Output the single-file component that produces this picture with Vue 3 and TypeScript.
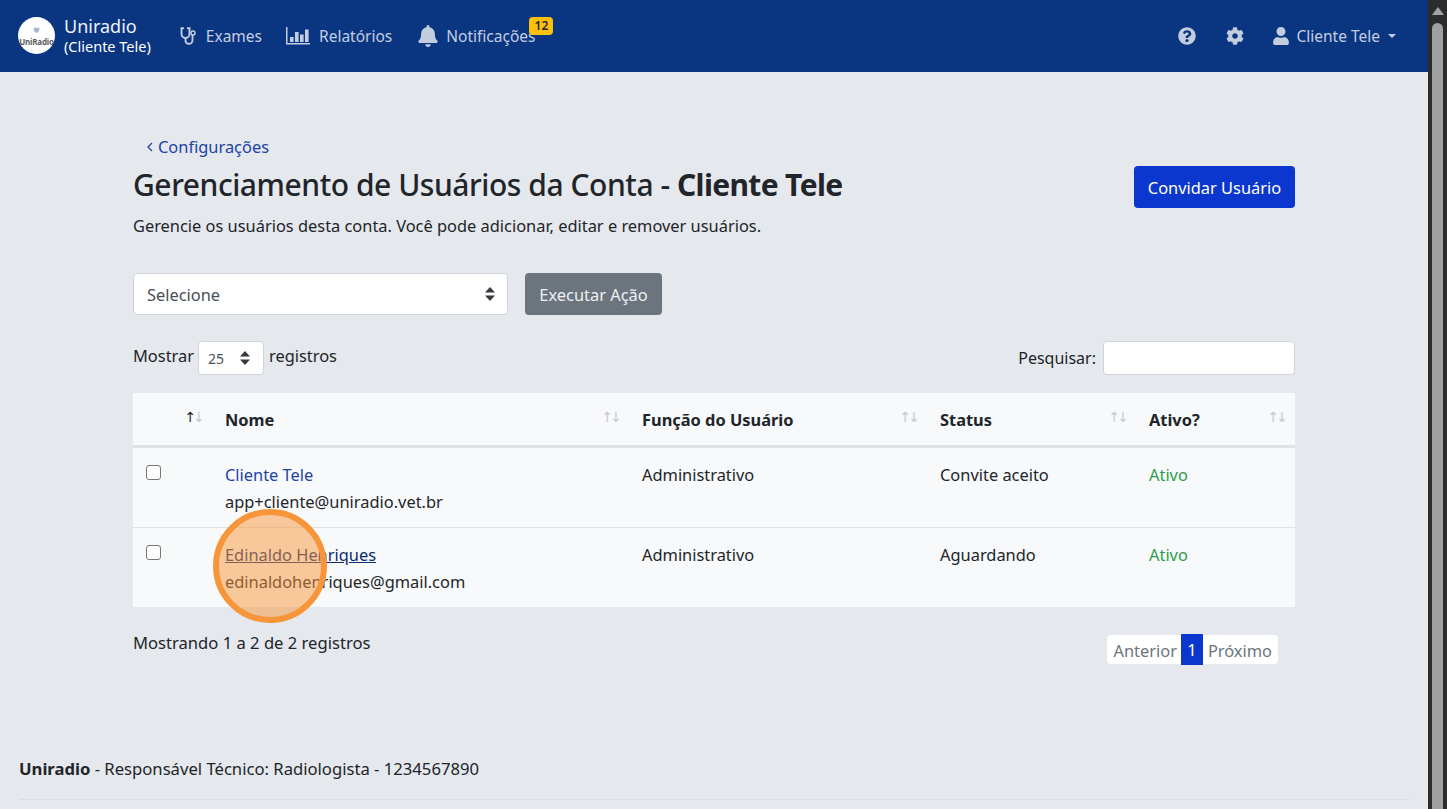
<script setup lang="ts">
interface Column {
  label: string;
  active?: boolean;
}

interface UserRow {
  name: string;
  email: string;
  role: string;
  status: string;
  hovered?: boolean;
}

const columns: Column[] = [
  { label: '', active: true },
  { label: 'Nome' },
  { label: 'Função do Usuário' },
  { label: 'Status' },
  { label: 'Ativo?' },
];

const users: UserRow[] = [
  { name: 'Cliente Tele', email: 'app+cliente@uniradio.vet.br', role: 'Administrativo', status: 'Convite aceito' },
  { name: 'Edinaldo Henriques', email: 'edinaldohenriques@gmail.com', role: 'Administrativo', status: 'Aguardando', hovered: true },
];
</script>

<template>
  <div class="shell">
    <div class="page">
      <nav class="navbar">
        <a class="brand">
          <span class="logo">
            <svg class="logo-mark" viewBox="0 0 10 10"><path d="M1 1h8v4.500L5 9 1 5.500z" /></svg>
            <span class="logo-text">UniRadio</span>
          </span>
          <span class="brand-text">
            <span class="brand-name">Uniradio</span>
            <span class="brand-sub">(Cliente Tele)</span>
          </span>
        </a>

        <ul class="nav-links">
          <li class="nav-item exames">
            <svg class="ico steth" viewBox="0 0 18 18" fill="none" stroke="currentColor" stroke-width="1.900" stroke-linecap="round">
              <path d="M3.200 1.200H1.500v5.600c0 2.500 1.800 4.200 4 4.200s4-1.700 4-4.200V1.200H7.800" />
              <path d="M5.500 11v2.200c0 2 1.400 3.500 3.400 3.500s3.600-1.500 3.600-3.500V8.500" />
              <circle cx="13" cy="6" r="2" stroke-width="1.500" />
            </svg>
            Exames
          </li>
          <li class="nav-item relatorios">
            <svg class="ico chart" viewBox="0 0 24 18" fill="currentColor">
              <path d="M0 0h1.500v16H24v1.500H0z" />
              <rect x="4" y="10" width="3.600" height="5" />
              <rect x="9" y="5" width="3.600" height="10" />
              <rect x="14" y="7.500" width="3.600" height="7.500" />
              <rect x="19" y="2.500" width="3.600" height="12.500" />
            </svg>
            Relatórios
          </li>
          <li class="nav-item notif">
            <svg class="ico bell" viewBox="0 0 448 512" fill="currentColor">
              <path d="M224 512c35.320 0 63.970-28.650 63.970-64H160.030c0 35.350 28.650 64 63.970 64zm215.390-149.710c-19.320-20.760-55.470-51.990-55.470-154.290 0-77.700-54.480-139.900-127.940-155.160V32c0-17.670-14.320-32-31.980-32s-31.980 14.330-31.980 32v20.840C118.560 68.100 64.080 130.300 64.080 208c0 102.300-36.150 133.530-55.470 154.290-6 6.450-8.660 14.160-8.610 21.710.110 16.400 12.980 32 32.100 32h383.800c19.120 0 32-15.600 32.100-32 .050-7.550-2.610-15.270-8.610-21.710z" />
            </svg>
            Notificações
            <span class="badge">12</span>
          </li>
        </ul>

        <div class="nav-right">
          <svg class="ico round" viewBox="0 0 512 512" fill="currentColor">
            <path d="M504 256c0 136.997-111.043 248-248 248S8 392.997 8 256C8 119.083 119.043 8 256 8s248 111.083 248 248zM262.655 90c-54.497 0-89.255 22.957-116.549 63.758-3.536 5.286-2.353 12.415 2.715 16.258l34.699 26.310c5.205 3.947 12.621 3.008 16.665-2.122 17.864-22.658 30.113-35.797 57.303-35.797 20.429 0 45.698 13.148 45.698 32.958 0 14.976-12.363 22.667-32.534 33.976C247.128 238.528 216 254.941 216 296v4c0 6.627 5.373 12 12 12h56c6.627 0 12-5.373 12-12v-1.333c0-28.462 83.186-29.647 83.186-106.667 0-58.002-60.165-102-116.531-102zM256 338c-25.365 0-46 20.635-46 46 0 25.364 20.635 46 46 46s46-20.636 46-46c0-25.365-20.635-46-46-46z" />
          </svg>
          <svg class="ico round cog" viewBox="0 0 512 512" fill="currentColor">
            <path d="M487.400 315.700l-42.600-24.600c4.300-23.200 4.300-47 0-70.200l42.600-24.600c4.900-2.800 7.100-8.600 5.500-14-11.100-35.600-30-67.800-54.700-94.600-3.800-4.100-10-5.100-14.800-2.300L380.800 110c-17.900-15.400-38.500-27.300-60.800-35.100V25.800c0-5.600-3.900-10.500-9.400-11.700-36.700-8.200-74.300-7.800-109.200 0-5.500 1.200-9.400 6.100-9.400 11.700V75c-22.200 7.900-42.800 19.800-60.800 35.100L88.700 85.500c-4.900-2.800-11-1.900-14.800 2.300-24.700 26.700-43.600 58.900-54.700 94.600-1.700 5.400.600 11.200 5.500 14L67.300 221c-4.300 23.200-4.300 47 0 70.200l-42.600 24.600c-4.900 2.800-7.100 8.600-5.500 14 11.100 35.600 30 67.800 54.700 94.600 3.800 4.100 10 5.100 14.800 2.300l42.600-24.600c17.900 15.400 38.500 27.300 60.800 35.100v49.200c0 5.600 3.900 10.500 9.400 11.700 36.700 8.200 74.300 7.800 109.200 0 5.500-1.200 9.400-6.100 9.400-11.700v-49.200c22.200-7.900 42.800-19.800 60.800-35.100l42.600 24.600c4.900 2.800 11 1.900 14.800-2.300 24.700-26.700 43.600-58.900 54.700-94.600 1.500-5.500-.700-11.300-5.600-14.100zM256 336c-44.100 0-80-35.900-80-80s35.900-80 80-80 80 35.900 80 80-35.900 80-80 80z" />
          </svg>
          <span class="user-menu">
            <svg class="ico user" viewBox="0 0 448 512" fill="currentColor">
              <path d="M224 256c70.700 0 128-57.300 128-128S294.700 0 224 0 96 57.300 96 128s57.300 128 128 128zm89.600 32h-16.700c-22.200 10.200-46.900 16-72.900 16s-50.600-5.800-72.900-16h-16.700C60.200 288 0 348.200 0 422.400V464c0 26.500 21.500 48 48 48h352c26.500 0 48-21.500 48-48v-41.600c0-74.200-60.200-134.400-134.400-134.400z" />
            </svg>
            Cliente Tele
            <span class="caret"></span>
          </span>
        </div>
      </nav>

      <main class="content">
        <a class="back-link"><svg class="chev" viewBox="0 0 6 10" fill="none" stroke="currentColor" stroke-width="1.300"><path d="M5 1 1 5l4 4" /></svg>Configurações</a>

        <div class="title-row">
          <div>
            <h1>Gerenciamento de Usuários da Conta - <strong>Cliente Tele</strong></h1>
            <p class="lead">Gerencie os usuários desta conta. Você pode adicionar, editar e remover usuários.</p>
          </div>
          <button class="btn btn-primary">Convidar Usuário</button>
        </div>

        <div class="action-row">
          <div class="select-wrap bulk">
            <select class="bulk-select"><option>Selecione</option></select>
            <svg class="updown" viewBox="0 0 10 14" fill="currentColor"><path d="M5 0l5 5.500H0zM5 14 0 8.500h10z" /></svg>
          </div>
          <button class="btn btn-secondary">Executar Ação</button>
        </div>

        <div class="table-tools">
          <div class="length">
            Mostrar
            <div class="select-wrap small">
              <select class="length-select"><option>25</option></select>
              <svg class="updown" viewBox="0 0 10 14" fill="currentColor"><path d="M5 0l5 5.500H0zM5 14 0 8.500h10z" /></svg>
            </div>
            registros
          </div>
          <label class="search">Pesquisar: <input type="search" /></label>
        </div>

        <div class="table-wrap">
          <table>
            <colgroup>
              <col class="c-check" /><col class="c-name" /><col class="c-role" /><col class="c-status" /><col class="c-active" />
            </colgroup>
            <thead>
              <tr>
                <th v-for="col in columns" :key="col.label">
                  {{ col.label }}
                  <span class="sort" :class="{ asc: col.active }"><i class="up">↑</i><i class="down">↓</i></span>
                </th>
              </tr>
            </thead>
            <tbody>
              <tr v-for="user in users" :key="user.email">
                <td><input class="check" type="checkbox" /></td>
                <td>
                  <a class="user-link" :class="{ hovered: user.hovered }">{{ user.name }}</a>
                  <div class="email">{{ user.email }}</div>
                </td>
                <td>{{ user.role }}</td>
                <td>{{ user.status }}</td>
                <td class="active-cell">Ativo</td>
              </tr>
            </tbody>
          </table>
          <div class="click-mark"></div>
        </div>

        <div class="table-foot">
          <span class="info">Mostrando 1 a 2 de 2 registros</span>
          <div class="pager">
            <span class="page-btn first">Anterior</span>
            <span class="page-btn current">1</span>
            <span class="page-btn last">Próximo</span>
          </div>
        </div>
      </main>

      <footer class="footer">
        <p><strong>Uniradio</strong> - Responsável Técnico: Radiologista - 1234567890</p>
        <hr />
      </footer>
    </div>

    <aside class="scrollbar">
      <span class="sb-arrow"></span>
      <span class="sb-thumb"></span>
    </aside>
  </div>
</template>

<style scoped>
.shell {
  display: flex;
  height: 809px;
  overflow: hidden;
  font-family: "Noto Sans", "Open Sans", sans-serif;
  font-size: 16.4px;
  line-height: 24px;
  color: #212529;
}

.page {
  flex: 1;
  min-width: 0;
  background: #e5e8ed;
}

.navbar {
  display: flex;
  align-items: center;
  height: 72px;
  padding: 0 32px 1px 18px;
  box-sizing: border-box;
  background: #0a3580;
  color: #c3cde0;
  font-size: 15.5px;
}

.brand {
  display: flex;
  align-items: center;
  gap: 9px;
  color: #fff;
}

.logo {
  position: relative;
  display: block;
  width: 37px;
  height: 37px;
  border-radius: 50%;
  background: #fff;
}

.logo-mark {
  position: absolute;
  left: 15px;
  top: 10px;
  width: 7px;
  height: 7px;
  fill: #a9b6d8;
}

.logo-text {
  position: absolute;
  left: 0;
  right: 0;
  top: 13px;
  text-align: center;
  font-size: 8px;
  font-weight: 700;
  letter-spacing: -0.2px;
  color: #5c5c5c;
}

.brand-text {
  display: flex;
  flex-direction: column;
  margin-top: -2px;
}

.brand-name {
  font-size: 18px;
  line-height: 22px;
  color: #eef2f8;
}

.brand-sub {
  font-size: 14.5px;
  line-height: 18px;
}

.nav-links {
  display: flex;
  align-items: center;
  list-style: none;
  margin: 0 0 0 29px;
  padding: 0;
}

.nav-item {
  position: relative;
  display: flex;
  align-items: center;
}

.exames {
  gap: 8px;
}

.relatorios {
  gap: 9px;
  margin-left: 24px;
}

.notif {
  gap: 8px;
  margin-left: 26px;
}

.ico {
  display: block;
  flex: none;
}

.steth {
  width: 18px;
  height: 18px;
}

.chart {
  width: 24px;
  height: 18px;
}

.bell {
  width: 20px;
  height: 22px;
}

.badge {
  position: absolute;
  right: -18px;
  top: -7px;
  width: 24px;
  height: 18px;
  border-radius: 4px;
  background: #ffc107;
  color: #212529;
  font-size: 12px;
  font-weight: 600;
  line-height: 18px;
  text-align: center;
}

.nav-right {
  display: flex;
  align-items: center;
  margin-left: auto;
}

.round {
  width: 18px;
  height: 18px;
}

.cog {
  margin-left: 30px;
}

.user-menu {
  display: flex;
  align-items: center;
  gap: 8px;
  margin-left: 29px;
}

.user {
  width: 16px;
  height: 18px;
}

.caret {
  width: 0;
  height: 0;
  border-left: 4px solid transparent;
  border-right: 4px solid transparent;
  border-top: 4px solid currentColor;
}

.content {
  width: 1162px;
  margin: 0 auto;
  padding-top: 63px;
}

.back-link {
  display: flex;
  align-items: center;
  gap: 5px;
  padding-left: 14px;
  color: #1c43a6;
}

.chev {
  width: 6px;
  height: 10px;
}

.title-row {
  display: flex;
  justify-content: space-between;
  align-items: flex-start;
  margin-top: 7px;
}

h1 {
  margin: 0;
  font-size: 30px;
  line-height: 38px;
  font-weight: 500;
  letter-spacing: -0.45px;
}

h1 strong {
  font-weight: 700;
  letter-spacing: -0.65px;
}

.lead {
  margin: 10px 0 0;
}

.btn {
  height: 42px;
  padding: 2px 0 0;
  border: 0;
  border-radius: 4px;
  font: inherit;
  color: #fff;
}

.btn-primary {
  width: 161px;
  background: #0b37cf;
}

.btn-secondary {
  width: 137px;
  background: #6c757d;
  color: #eef0f2;
}

.action-row {
  display: flex;
  gap: 17px;
  margin-top: 35px;
}

.select-wrap {
  position: relative;
}

.select-wrap select {
  display: block;
  width: 100%;
  height: 100%;
  box-sizing: border-box;
  appearance: none;
  background: #fff;
  border: 1px solid #ced4da;
  border-radius: 4px;
  font: inherit;
  color: #495057;
}

.updown {
  position: absolute;
  top: 50%;
  width: 10px;
  height: 14px;
  margin-top: -7px;
  color: #343a40;
}

.bulk {
  width: 375px;
  height: 42px;
}

.bulk-select {
  padding: 2px 13px 0;
}

.bulk .updown {
  right: 13px;
}

.table-tools {
  display: flex;
  justify-content: space-between;
  margin-top: 26px;
}

.length {
  display: flex;
  align-items: flex-start;
  gap: 4px;
  height: 34px;
  line-height: 30px;
}

.small {
  width: 66px;
  height: 34px;
  margin-right: 1px;
}

.length-select {
  padding: 2px 9px 0;
  font-size: 14px !important;
}

.small .updown {
  right: 14px;
}

.search {
  display: flex;
  align-items: center;
  gap: 7px;
  font-size: 16px;
}

.search input {
  width: 192px;
  height: 34px;
  box-sizing: border-box;
  border: 1px solid #ced4da;
  border-radius: 4px;
  background: #fff;
}

.table-wrap {
  position: relative;
  margin-top: 18px;
}

table {
  width: 100%;
  table-layout: fixed;
  border-collapse: collapse;
  background: #f8f9fb;
}

.c-check { width: 84px; }
.c-name { width: 417px; }
.c-role { width: 298px; }
.c-status { width: 209px; }
.c-active { width: 154px; }

th {
  position: relative;
  height: 53px;
  padding: 2px 8px 0;
  box-sizing: border-box;
  text-align: left;
  font-weight: 700;
  border-bottom: 3px solid #dee2e6;
}

td {
  height: 80px;
  padding: 13px 8px 0;
  box-sizing: border-box;
  vertical-align: top;
  border-top: 1px solid #dee2e6;
  line-height: 27px;
}

tbody tr:first-child td {
  height: 81px;
  border-top: 0;
}

.sort {
  position: absolute;
  right: 15px;
  top: 12px;
  display: flex;
  font-family: "DejaVu Sans", sans-serif;
  font-size: 14px;
  font-weight: 400;
  letter-spacing: -3px;
  color: #c6cad0;
}

th:last-child .sort {
  right: 10px;
}

.sort i {
  font-style: normal;
}

.sort.asc .up {
  color: #212529;
}

.check {
  appearance: none;
  display: block;
  width: 15px;
  height: 15px;
  margin: 4px 0 0 5px;
  border: 1px solid #767676;
  border-radius: 3px;
  background: #fff;
}

.user-link {
  color: #1c43a6;
}

.user-link.hovered {
  color: #0a2a70;
  text-decoration: underline;
}

.active-cell {
  color: #2c9f4b;
}

.click-mark {
  position: absolute;
  left: 80px;
  top: 116px;
  width: 114px;
  height: 114px;
  box-sizing: border-box;
  border: 6px solid #f7953a;
  border-radius: 50%;
  background: rgba(247, 149, 58, 0.5);
}

.table-foot {
  display: flex;
  justify-content: space-between;
  align-items: flex-start;
  margin-top: 24px;
  padding-right: 17px;
}

.info {
  font-size: 16.6px;
}

.pager {
  display: flex;
  align-items: center;
  height: 31px;
  margin-top: 3px;
  color: #6c757d;
}

.page-btn {
  height: 29px;
  line-height: 31px;
  padding: 0 5px;
  background: #fff;
}

.first {
  border-radius: 4px 0 0 4px;
  padding: 0 4px 0 6px;
}

.last {
  border-radius: 0 4px 4px 0;
  padding-right: 6px;
}

.current {
  height: 31px;
  width: 22px;
  padding: 0;
  box-sizing: border-box;
  text-align: center;
  background: #0b37cf;
  color: #fff;
}

.footer {
  padding: 92px 19px 0;
}

.footer p {
  margin: 0;
  font-size: 16.65px;
}

.footer hr {
  width: 1391px;
  margin: 18px 0 0;
  border: 0;
  border-top: 1px solid #dadde2;
}

.scrollbar {
  position: relative;
  flex: none;
  width: 19px;
  background: #2c2c2c;
}

.sb-arrow {
  position: absolute;
  left: 4px;
  top: 7px;
  border-left: 6px solid transparent;
  border-right: 6px solid transparent;
  border-bottom: 8px solid #a3a3a3;
}

.sb-thumb {
  position: absolute;
  left: 4px;
  right: 4px;
  top: 23px;
  bottom: 0;
  border-radius: 6px 6px 0 0;
  background: #a0a0a0;
}
</style>
